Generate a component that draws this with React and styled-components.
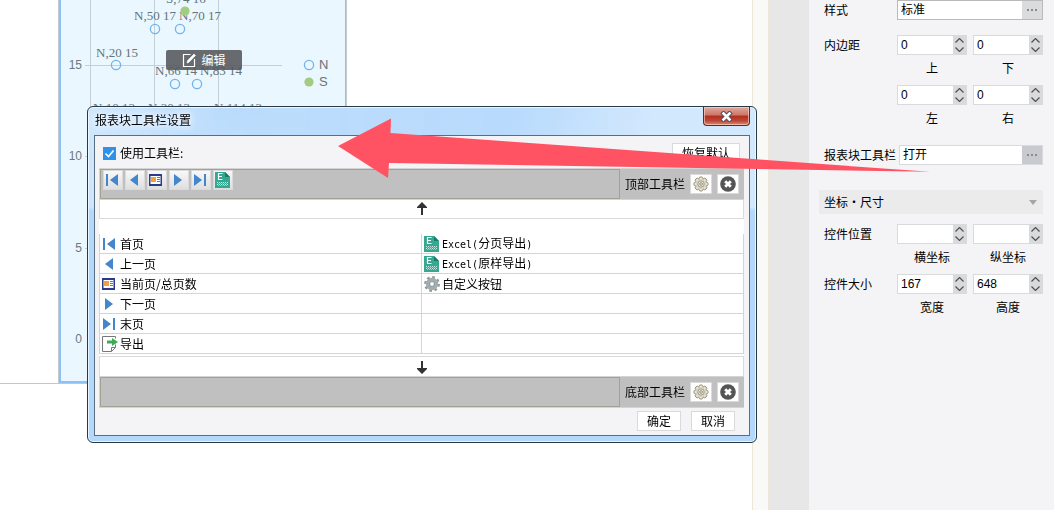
import React, { useState } from 'react';
import styled, { createGlobalStyle } from 'styled-components';

const GlobalStyle = createGlobalStyle`
  * {
    box-sizing: border-box;
  }

  body {
    margin: 0;
    background: #fff;
    color: #000;
    font-family: 'Noto Sans CJK SC', sans-serif;
    font-size: 12px;
    line-height: 16px;
    overflow: hidden;
  }

  button, input {
    font: inherit;
    color: inherit;
    margin: 0;
  }
`;

const Page = styled.div`
  position: relative;
  display: flex;
  min-height: 100vh;
`;

/* Canvas with the report */

const Workspace = styled.main`
  flex: 1;
  min-width: 0;
  border-right: 1px solid #ebe6d6;
`;

const Sheet = styled.div`
  padding-left: 58px;
  border-bottom: 1px solid #c6c6c6;
`;

const ReportBlock = styled.section`
  position: relative;
  width: 289px;
  border: 1px solid #c3cbd2;
  border-width: 0 1px;
`;

const BlockFrame = styled.div`
  border: 2px solid #8dc0f7;
  border-width: 0 1px 2px 2px;
  background: #eaf7fe;

  svg {
    display: block;
    overflow: hidden;
  }
`;

const EditButton = styled.button`
  position: absolute;
  top: 50px;
  left: 107px;
  display: flex;
  align-items: center;
  justify-content: center;
  gap: 4px;
  width: 76px;
  height: 20px;
  padding: 0;
  border: none;
  border-radius: 2px;
  background: rgba(82, 84, 87, 0.86);
  color: #fff;
`;

const ScrollGutter = styled.div`
  width: 16px;
  background: #f9f9f7;
  border-right: 1px solid #ebe6d6;
`;

const Divider = styled.div`
  width: 40px;
  background: #e7e7e7;
`;

/* Property panel */

const Panel = styled.aside`
  width: 245px;
  padding: 0 11px 0 10px;
  background: #f4f4f7;
`;

const PropertyRow = styled.div`
  display: flex;
  align-items: flex-start;
  padding-left: 5px;
  margin-top: ${(props) => props.$gap || 0}px;
`;

const PropertyName = styled.label`
  min-width: 73px;
  padding-right: 3px;
  flex: none;
  line-height: 20px;
  white-space: nowrap;
`;

const Pair = styled.div`
  flex: 1;
  display: grid;
  grid-template-columns: 1fr 1fr;
  column-gap: 6px;
  row-gap: 4px;
`;

const SpinnerLabel = styled.label`
  display: block;
  line-height: 26px;
  text-align: center;
`;

const SpinnerBox = styled.div`
  display: flex;
  height: 20px;
  border: 1px solid #d9dadc;
  background: #fff;
`;

const TextInput = styled.input`
  flex: 1;
  width: 100%;
  min-width: 0;
  padding: 0 3px;
  border: none;
  outline: none;
  background: transparent;
  font-family: 'Liberation Sans', 'Noto Sans CJK SC', sans-serif;
`;

const Steps = styled.div`
  display: flex;
  flex-direction: column;
  width: 13px;
  background: #d9dadc;
`;

const StepButton = styled.button`
  flex: 1;
  display: flex;
  align-items: center;
  justify-content: center;
  padding: 0;
  border: none;
  background: none;
`;

const Picker = styled.div`
  flex: 1;
  display: flex;
  height: 20px;
  border: 1px solid ${(props) => (props.$dark ? '#b9babc' : '#d9dadc')};
  background: #fff;
`;

const MoreButton = styled.button`
  display: flex;
  align-items: center;
  justify-content: center;
  width: 20px;
  padding: 0;
  border: none;
  background: ${(props) => props.$fill};
`;

const SectionHeader = styled.button`
  display: flex;
  align-items: center;
  justify-content: space-between;
  width: 100%;
  height: 24px;
  margin: 25px 0 10px;
  padding: 0 6px 0 5px;
  border: none;
  background: #ebebeb;
`;

/* Toolbar settings window */

const Overlay = styled.div`
  position: absolute;
  top: 0;
  left: 0;
  right: 0;
  padding: 106px 297px 0 87px;
`;

const Dialog = styled.div`
  padding: 0 6px 6px;
  border: 1px solid #2b3945;
  border-radius: 6px;
  box-shadow: inset 0 0 0 1px rgba(240, 250, 255, 0.85);
  background:
    linear-gradient(rgba(176, 213, 249, 0) 100px, #b4d8fb 104px),
    linear-gradient(
      100deg,
      rgba(205, 230, 253, 0.92) 0,
      rgba(185, 218, 252, 0.92) 130px,
      rgba(180, 216, 252, 0.94) 420px,
      rgba(208, 231, 253, 0.95) 560px,
      rgba(208, 231, 253, 0.95) 100%
    );
  backdrop-filter: blur(4px);
`;

const TitleBar = styled.div`
  display: flex;
  align-items: flex-start;
  justify-content: space-between;
  height: 28px;
`;

const Title = styled.h1`
  margin: 0;
  padding-left: 1px;
  font-size: 12px;
  font-weight: 400;
  line-height: 26px;
  text-shadow: 0 0 6px #fff, 0 0 8px #fff;
`;

const CloseButton = styled.button`
  display: flex;
  align-items: center;
  justify-content: center;
  width: 47px;
  height: 19px;
  padding: 0;
  border: 1px solid #5d2a2c;
  border-top: none;
  border-radius: 0 0 4px 4px;
  box-shadow: inset 0 0 0 1px rgba(255, 220, 210, 0.6);
  background: linear-gradient(#e0aaa0 0, #cd7565 45%, #b0301f 50%, #bd4535 75%, #d98a72 100%);
`;

const DialogBody = styled.div`
  padding: 7px 5px 3px 4px;
  border: 1px solid #5b6d80;
  background: #f4f4f7;
`;

const BodyHeader = styled.div`
  display: flex;
  justify-content: space-between;
  height: 25px;
  padding: 0 4px;
`;

const UseToolbar = styled.label`
  display: flex;
  align-items: center;
  gap: 4px;
  height: 20px;
`;

const CheckBox = styled.input`
  appearance: none;
  width: 13px;
  height: 13px;
  background: #2f92ea;
`;

const CheckMark = styled.svg`
  margin-left: -17px;
  pointer-events: none;
`;

const PlainButton = styled.button`
  width: ${(props) => (props.$wide ? 68 : 44)}px;
  height: 20px;
  padding: 0;
  border: 1px solid #d9dadc;
  background: #fff;
  line-height: 18px;
`;

const Band = styled.div`
  display: flex;
  height: 32px;
  border: 1px solid #d4d4d4;
  border-right: none;
  background: #c0c0c0;
`;

const Well = styled.div`
  flex: 1;
  display: flex;
  align-items: flex-start;
  gap: 2px;
  padding: 0 2px;
  border: 1px solid #a2a294;
`;

const BandTools = styled.div`
  display: flex;
  align-items: center;
  gap: 5px;
  padding: 0 5px;
`;

const SquareButton = styled.button`
  display: flex;
  align-items: center;
  justify-content: center;
  width: 22px;
  height: 20px;
  padding: 0;
  border: 1px solid #dadada;
  background: #fff;
`;

const ToolButton = styled(SquareButton)`
  width: 20px;
  background: linear-gradient(#f8f8f8, #dedede);
`;

const MoveButton = styled.button`
  display: flex;
  align-items: center;
  justify-content: center;
  width: 100%;
  height: ${(props) => (props.$down ? 20 : 19)}px;
  padding: 0;
  border: 1px solid #d9dadc;
  border-width: ${(props) => (props.$down ? '1px 1px 0' : '0 1px 1px')};
  background: #fff;
`;

const Choices = styled.div`
  padding: 15px 0 2px;
  background: #fff;
`;

const ChoiceTable = styled.table`
  width: 100%;
  table-layout: fixed;
  border-collapse: separate;
  border-spacing: 0;
  border-left: 1px solid #d4d4d6;
`;

const ChoiceCell = styled.td`
  height: 20px;
  padding: 0 2px;
  border: 1px solid #d4d4d6;
  border-width: 0 1px 1px 0;
`;

const Choice = styled.div`
  display: flex;
  align-items: center;
  gap: 2px;
  height: 19px;
  white-space: nowrap;
`;

const Latin = styled.span`
  font-family: 'DejaVu Sans Mono', monospace;
  font-size: 10px;
`;

const Footer = styled.div`
  display: flex;
  justify-content: flex-end;
  gap: 10px;
  padding: 3px 9px 1px 0;
`;

const Pointer = styled.svg`
  position: absolute;
  top: 118px;
  left: 338px;
  pointer-events: none;
`;

const BLUE = '#4486cb';

const petals = [0, 45, 90, 135, 180, 225, 270, 315];

const icons = {
  first: (
    <g fill={BLUE}>
      <rect x="1" y="2" width="2" height="12" />
      <path d="M13 2v12L5 8z" />
    </g>
  ),
  prev: <path d="M11 2v12L3 8z" fill={BLUE} />,
  page: (
    <g>
      <rect x="0.5" y="2.5" width="12" height="11" fill="#fff" stroke="#2b3a8c" />
      <path d="M0 2h13v2H0zM0 12h13v2H0zM0 2h1.500v12H0zM11.500 2H13v12h-1.500z" fill="#2b3a8c" />
      <rect x="2" y="5" width="5" height="5" fill="#f0a03c" />
      <path d="M8 5.500h3M8 7.500h3M8 9.500h3" stroke="#6673b0" />
    </g>
  ),
  next: <path d="M3 2v12l8-6z" fill={BLUE} />,
  last: (
    <g fill={BLUE}>
      <path d="M1 2v12l8-6z" />
      <rect x="11" y="2" width="2" height="12" />
    </g>
  ),
  export: (
    <g>
      <path d="M13.500 2.500V.5H.5v15h9l4-4v-3M9.500 15.500v-4h4" fill="#fff" stroke="#777" />
      <path d="M5 4.500h5V2l6 4-6 4V7.500H5z" fill="#3bad55" />
    </g>
  ),
  excel: (
    <g>
      <path d="M0 0h10l5 5v11H0z" fill="#35a892" />
      <path d="M10 0l5 5h-5z" fill="#1d7a69" />
      <path d="M7.500 1.500h-4v6h4M3.500 4.500h3.500" fill="none" stroke="#fff" strokeWidth="1.200" />
      <path d="M2 10.500h11M2 12.500h11" stroke="#c4e9e1" strokeDasharray="1 1" />
      <path d="M3 11.500h10M3 13.500h9" stroke="#8fd2c5" strokeDasharray="1 1" />
    </g>
  ),
  gear: (
    <g>
      <circle cx="8" cy="8" r="6.600" fill="none" stroke="#8f999d" strokeWidth="2.600" strokeDasharray="2.600 2.584" />
      <circle cx="8" cy="8" r="4.200" fill="none" stroke="#a3acaf" strokeWidth="4" />
      <circle cx="8" cy="8" r="2.400" fill="#fff" stroke="#899397" />
    </g>
  ),
  settings: (
    <g>
      {petals.map((angle) => (
        <circle
          key={angle}
          cx="8"
          cy="2.800"
          r="2"
          fill="#e9e6d8"
          stroke="#8d8972"
          strokeWidth="0.900"
          transform={`rotate(${angle} 8 8)`}
        />
      ))}
      <circle cx="8" cy="8" r="5.200" fill="#dcd9c8" />
      <circle cx="8" cy="8" r="3.200" fill="#efede2" stroke="#9b9780" />
      <circle cx="8" cy="8" r="1.300" fill="#fff" stroke="#8d8972" />
    </g>
  ),
  clear: (
    <g>
      <circle cx="8" cy="8" r="7.800" fill="#555" />
      <path d="M5.200 5.200l5.600 5.600M10.800 5.200l-5.600 5.600" stroke="#fff" strokeWidth="2.800" />
    </g>
  ),
};

const Icon = ({ name }) => (
  <svg width="16" height="16" viewBox="0 0 16 16" aria-hidden="true">
    {icons[name]}
  </svg>
);

const Chevron = ({ up }) => (
  <svg width="9" height="5" viewBox="0 0 9 5" aria-hidden="true">
    <path d={up ? 'M.5 4.500l4-4 4 4' : 'M.5.5l4 4 4-4'} fill="none" stroke="#505050" strokeWidth="1.200" />
  </svg>
);

const Dots = () => (
  <svg width="12" height="2" viewBox="0 0 12 2" aria-hidden="true">
    <path d="M1 0h2v2H1zM5 0h2v2H5zM9 0h2v2H9z" fill="#8a8b8f" />
  </svg>
);

const tools = [
  ['first', '首页'],
  ['prev', '上一页'],
  ['page', '当前页/总页数'],
  ['next', '下一页'],
  ['last', '末页'],
  ['excel', '导出Excel'],
];

const choices = [
  [['first', '首页'], ['excel', '分页导出', true]],
  [['prev', '上一页'], ['excel', '原样导出', true]],
  [['page', '当前页/总页数'], ['gear', '自定义按钮']],
  [['next', '下一页'], null],
  [['last', '末页'], null],
  [['export', '导出'], null],
];

const points = [
  { label: 'S,74 16', x: 185, y: 11, labelX: 166, labelY: 3, filled: true },
  { label: 'N,50 17', x: 155, y: 29, labelX: 134, labelY: 20 },
  { label: 'N,70 17', x: 180, y: 29, labelX: 179, labelY: 20 },
  { label: 'N,20 15', x: 116, y: 65, labelX: 96, labelY: 57 },
  { label: 'N,66 14', x: 175, y: 84, labelX: 155, labelY: 75 },
  { label: 'N,83 14', x: 197, y: 84, labelX: 200, labelY: 75 },
  { label: 'N,10 13', x: 113, y: 121, labelX: 93, labelY: 112 },
  { label: 'N,30 13', x: 168, y: 121, labelX: 148, labelY: 112 },
  { label: 'N,114 13', x: 238, y: 121, labelX: 214, labelY: 112 },
];

const Dot = ({ x, y, filled }) => (
  <circle
    cx={x}
    cy={y}
    r="4.600"
    fill={filled ? '#a3cb83' : 'none'}
    stroke={filled ? 'none' : '#73b3ec'}
    strokeWidth="1.300"
  />
);

const ScatterChart = () => (
  <svg width="284" height="381" viewBox="61 0 284 381" role="img" aria-label="散点图">
    <path
      d="M90.500 0v339M154.500 0v339M218.500 0v339M85 65.500h197M85 156.500h197M85 248.500h197"
      stroke="#c3d0d6"
      fill="none"
    />
    <g fill="#6b7880" fontFamily="'Liberation Sans', sans-serif" fontSize="12">
      <text x="82" y="69" textAnchor="end">15</text>
      <text x="82" y="160" textAnchor="end">10</text>
      <text x="82" y="252" textAnchor="end">5</text>
      <text x="82" y="343" textAnchor="end">0</text>
    </g>
    <g fill="#66737a" fontFamily="'Liberation Serif', serif" fontSize="13">
      {points.map((p) => (
        <text key={p.label} x={p.labelX} y={p.labelY}>{p.label}</text>
      ))}
    </g>
    {points.map((p) => (
      <Dot key={p.label} x={p.x} y={p.y} filled={p.filled} />
    ))}
    <Dot x={309} y={65} />
    <Dot x={309} y={82} filled />
    <g fill="#66737a" fontFamily="'Liberation Sans', sans-serif" fontSize="13">
      <text x="319" y="69">N</text>
      <text x="319" y="86">S</text>
    </g>
  </svg>
);

const Spinner = ({ id, label, initial = '' }) => {
  const [value, setValue] = useState(initial);
  const step = (n) => setValue(String((Number(value) || 0) + n));

  return (
    <div>
      <SpinnerBox>
        <TextInput id={id} value={value} onChange={(e) => setValue(e.target.value)} />
        <Steps>
          <StepButton type="button" aria-label={`${label} +`} onClick={() => step(1)}>
            <Chevron up />
          </StepButton>
          <StepButton type="button" aria-label={`${label} -`} onClick={() => step(-1)}>
            <Chevron />
          </StepButton>
        </Steps>
      </SpinnerBox>
      <SpinnerLabel htmlFor={id}>{label}</SpinnerLabel>
    </div>
  );
};

const PropertyPanel = () => (
  <Panel>
    <PropertyRow>
      <PropertyName htmlFor="style">样式</PropertyName>
      <Picker $dark>
        <TextInput id="style" defaultValue="标准" />
        <MoreButton type="button" aria-label="选择样式" $fill="#dadbdd"><Dots /></MoreButton>
      </Picker>
    </PropertyRow>

    <PropertyRow $gap={15}>
      <PropertyName as="span">内边距</PropertyName>
      <Pair>
        <Spinner id="pad-top" label="上" initial="0" />
        <Spinner id="pad-bottom" label="下" initial="0" />
        <Spinner id="pad-left" label="左" initial="0" />
        <Spinner id="pad-right" label="右" initial="0" />
      </Pair>
    </PropertyRow>

    <PropertyRow $gap={14}>
      <PropertyName htmlFor="toolbar">报表块工具栏</PropertyName>
      <Picker>
        <TextInput id="toolbar" defaultValue="打开" />
        <MoreButton type="button" aria-label="设置工具栏" $fill="#c9cacf"><Dots /></MoreButton>
      </Picker>
    </PropertyRow>

    <SectionHeader type="button">
      坐标・尺寸
      <svg width="8" height="5" viewBox="0 0 8 5" aria-hidden="true">
        <path d="M0 0h8L4 5z" fill="#a5a5a5" />
      </svg>
    </SectionHeader>

    <PropertyRow>
      <PropertyName as="span">控件位置</PropertyName>
      <Pair>
        <Spinner id="pos-x" label="横坐标" />
        <Spinner id="pos-y" label="纵坐标" />
      </Pair>
    </PropertyRow>

    <PropertyRow $gap={4}>
      <PropertyName as="span">控件大小</PropertyName>
      <Pair>
        <Spinner id="width" label="宽度" initial="167" />
        <Spinner id="height" label="高度" initial="648" />
      </Pair>
    </PropertyRow>
  </Panel>
);

const ToolbarBand = ({ name, items = [] }) => (
  <Band>
    <Well>
      {items.map(([icon, label]) => (
        <ToolButton key={icon} type="button" aria-label={label}>
          <Icon name={icon} />
        </ToolButton>
      ))}
    </Well>
    <BandTools>
      <span>{name}</span>
      <SquareButton type="button" aria-label={`${name}设置`}><Icon name="settings" /></SquareButton>
      <SquareButton type="button" aria-label={`${name}清空`}><Icon name="clear" /></SquareButton>
    </BandTools>
  </Band>
);

const ChoiceItem = ({ item }) => {
  if (!item) return null;
  const [icon, text, excel] = item;
  return (
    <Choice>
      <Icon name={icon} />
      <span>
        {excel && <Latin>Excel(</Latin>}
        {text}
        {excel && <Latin>)</Latin>}
      </span>
    </Choice>
  );
};

const ToolbarDialog = () => {
  const [enabled, setEnabled] = useState(true);

  return (
    <Overlay>
      <Dialog role="dialog" aria-labelledby="dialog-title">
        <TitleBar>
          <Title id="dialog-title">报表块工具栏设置</Title>
          <CloseButton type="button" aria-label="关闭">
            <svg width="13" height="11" viewBox="0 0 13 11" aria-hidden="true">
              <path d="M3.500 2.500l6 6M9.500 2.500l-6 6" stroke="#4d5668" strokeWidth="4.600" strokeLinecap="square" />
              <path d="M3.500 2.500l6 6M9.500 2.500l-6 6" stroke="#fff" strokeWidth="2.600" strokeLinecap="square" />
            </svg>
          </CloseButton>
        </TitleBar>
        <DialogBody>
          <BodyHeader>
            <UseToolbar>
              <CheckBox type="checkbox" checked={enabled} onChange={() => setEnabled(!enabled)} />
              <CheckMark width="13" height="13" viewBox="0 0 13 13" aria-hidden="true">
                {enabled && <path d="M2.500 6.500l3 3 5-6" fill="none" stroke="#fff" strokeWidth="1.600" />}
              </CheckMark>
              使用工具栏:
            </UseToolbar>
            <PlainButton type="button" $wide>恢复默认</PlainButton>
          </BodyHeader>
          <ToolbarBand name="顶部工具栏" items={tools} />
          <MoveButton type="button" aria-label="移到顶部">
            <svg width="12" height="14" viewBox="0 0 12 14" aria-hidden="true">
              <path d="M6 0l5 5v1H7v7H5V6H1V5z" fill="#333" />
            </svg>
          </MoveButton>
          <Choices>
            <ChoiceTable>
              <tbody>
                {choices.map(([left, right]) => (
                  <tr key={left[0]}>
                    <ChoiceCell><ChoiceItem item={left} /></ChoiceCell>
                    <ChoiceCell><ChoiceItem item={right} /></ChoiceCell>
                  </tr>
                ))}
              </tbody>
            </ChoiceTable>
          </Choices>
          <MoveButton type="button" aria-label="移到底部" $down>
            <svg width="12" height="14" viewBox="0 0 12 14" aria-hidden="true">
              <path d="M6 14L1 9V8h4V1h2v7h4v1z" fill="#333" />
            </svg>
          </MoveButton>
          <ToolbarBand name="底部工具栏" />
          <Footer>
            <PlainButton type="button">确定</PlainButton>
            <PlainButton type="button">取消</PlainButton>
          </Footer>
        </DialogBody>
      </Dialog>
    </Overlay>
  );
};

const App = () => (
  <>
    <GlobalStyle />
    <Page>
      <Workspace>
        <Sheet>
          <ReportBlock>
            <BlockFrame>
              <ScatterChart />
            </BlockFrame>
            <EditButton type="button">
              <svg width="15" height="15" viewBox="0 0 15 15" fill="none" stroke="#fff" aria-hidden="true">
                <path d="M8.500 1.500h-7v12h11V6" strokeWidth="1.200" />
                <path d="M5 10l.6-2.400L12 1l1.500 1.500L7 9.200z" fill="#fff" strokeWidth="0.600" />
              </svg>
              编辑
            </EditButton>
          </ReportBlock>
        </Sheet>
      </Workspace>
      <ScrollGutter />
      <Divider />
      <PropertyPanel />
      <ToolbarDialog />
      <Pointer width="593" height="61" viewBox="338 118 593 61" aria-hidden="true">
        <path d="M338 146l53-27.500-.5 14.500L930 171.800 389 163l-1 15z" fill="#ff5364" />
      </Pointer>
    </Page>
  </>
);

export default App;
